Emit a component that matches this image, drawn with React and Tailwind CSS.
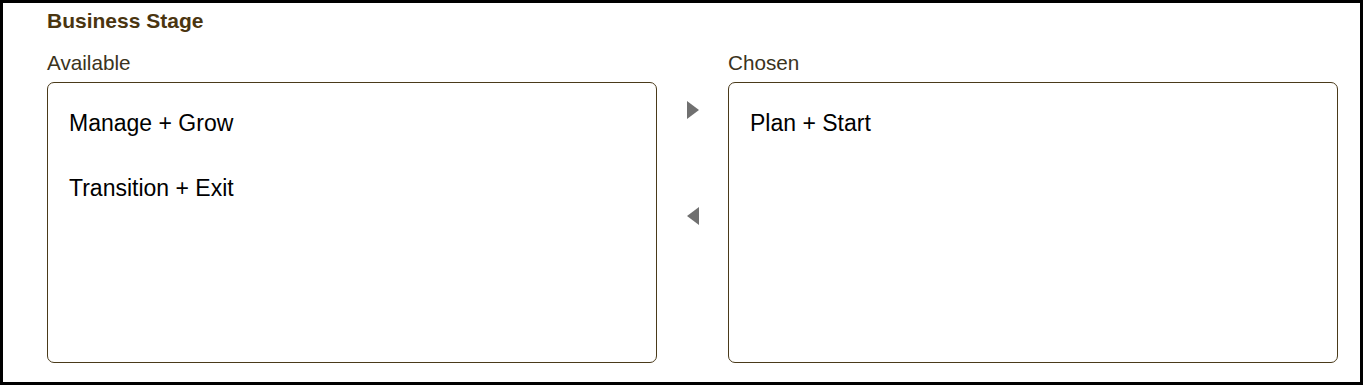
export default function App() {
  const available = ["Manage + Grow", "Transition + Exit"];
  const chosen = ["Plan + Start"];

  return (
    <div
      className="w-[1363px] h-[385px] border-[3px] border-black bg-white pl-[44px] pr-[22px] pt-[6px]"
      style={{ fontFamily: '"Liberation Sans", Arial, sans-serif' }}
    >
      <h2 className="text-[21px] leading-[24px] font-bold text-[#4a3510]">
        Business Stage
      </h2>
      <div className="flex mt-[18px]">
        <div className="w-[610px] flex flex-col">
          <div className="text-[20.7px] leading-[24px] text-[#3b3320]">Available</div>
          <ListBox items={available} />
        </div>
        <div className="w-[71px] flex flex-col items-center pt-[50px]">
          <button className="w-[12px] h-[18px] ml-[1px]" aria-label="Move right">
            <svg width="12" height="18" viewBox="0 0 12 18">
              <polygon points="0,0 12,9 0,18" fill="#707070" />
            </svg>
          </button>
          <button className="w-[12px] h-[18px] mt-[88px] ml-[1px]" aria-label="Move left">
            <svg width="12" height="18" viewBox="0 0 12 18">
              <polygon points="12,0 0,9 12,18" fill="#707070" />
            </svg>
          </button>
        </div>
        <div className="flex-1 flex flex-col">
          <div className="text-[20.7px] leading-[24px] text-[#3b3320]">Chosen</div>
          <ListBox items={chosen} />
        </div>
      </div>
    </div>
  );
}

function ListBox({ items }) {
  return (
    <div className="mt-[7px] h-[281px] border border-[#4a3a1a] rounded-[7px] pl-[21px] pt-[26px] flex flex-col gap-[37px]">
      {items.map((item) => (
        <div key={item} className="text-[23px] leading-[28px] text-black">
          {item}
        </div>
      ))}
    </div>
  );
}
